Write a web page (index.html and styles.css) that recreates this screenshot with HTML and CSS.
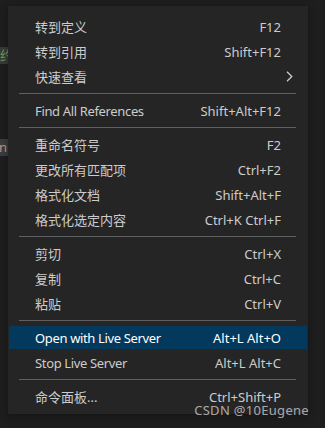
FILE: index.html
```html
<!DOCTYPE html>
<html lang="zh-CN">
<head>
    <meta charset="UTF-8">
    <title>Context Menu</title>
    <link rel="stylesheet" href="styles.css">
</head>
<body>

<div class="screen">
    <!-- editor text clipped behind the menu -->
    <div class="gutter">
        <div class="frag frag-comment">约</div>
        <div class="frag frag-string">n</div>
    </div>

    <div class="menu">
        <div class="item"><span class="label">转到定义</span><span class="keys">F12</span></div>
        <div class="item"><span class="label">转到引用</span><span class="keys">Shift+F12</span></div>
        <div class="item">
            <span class="label">快速查看</span>
            <svg class="chevron" width="7" height="11" viewBox="0 0 7 11">
                <path d="M1 0.8 L5.8 5.5 L1 10.2" fill="none" stroke="#cccccc" stroke-width="1.3"/>
            </svg>
        </div>
        <div class="sep"></div>
        <div class="item"><span class="label en">Find All References</span><span class="keys">Shift+Alt+F12</span></div>
        <div class="sep"></div>
        <div class="item"><span class="label">重命名符号</span><span class="keys">F2</span></div>
        <div class="item"><span class="label">更改所有匹配项</span><span class="keys">Ctrl+F2</span></div>
        <div class="item"><span class="label">格式化文档</span><span class="keys">Shift+Alt+F</span></div>
        <div class="item"><span class="label">格式化选定内容</span><span class="keys">Ctrl+K Ctrl+F</span></div>
        <div class="sep"></div>
        <div class="item"><span class="label">剪切</span><span class="keys">Ctrl+X</span></div>
        <div class="item"><span class="label">复制</span><span class="keys">Ctrl+C</span></div>
        <div class="item"><span class="label">粘贴</span><span class="keys">Ctrl+V</span></div>
        <div class="sep"></div>
        <div class="item active"><span class="label en">Open with Live Server</span><span class="keys">Alt+L Alt+O</span></div>
        <div class="item"><span class="label en">Stop Live Server</span><span class="keys">Alt+L Alt+C</span></div>
        <div class="sep"></div>
        <div class="item"><span class="label">命令面板...</span><span class="keys">Ctrl+Shift+P</span></div>
    </div>

    <div class="watermark">CSDN @10Eugene</div>
</div>

</body>
</html>
```

FILE: styles.css
```css
body {
    margin: 0;
    background-color: #1e1e1e;
    font-family: "Noto Sans", "Noto Sans CJK SC", sans-serif;
    font-size: 13px;
    color: #cccccc;
}

.screen {
    position: relative;
    display: flex;
    width: 325px;
    height: 428px;
    overflow: hidden;
}

.gutter {
    width: 8px;
    overflow: hidden;
    flex-shrink: 0;
}

.frag {
    height: 17px;
    line-height: 17px;
    font-size: 13px;
    white-space: nowrap;
}

.frag-comment {
    margin-top: 47px;
    background-color: #373b38;
    color: #6a9955;
}

.frag-string {
    margin-top: 75px;
    background-color: #3a3d41;
    color: #ce9178;
    text-indent: -1px;
}

.menu {
    width: 300px;
    margin-top: 6px;
    padding: 8px 0 5px;
    align-self: flex-start;
    background-color: #252526;
    box-shadow: 0 2px 8px rgba(0, 0, 0, 0.36);
}

.item {
    display: flex;
    align-items: center;
    height: 23px;
    padding: 0 26px;
    border: 1px solid transparent;
    white-space: nowrap;
}

.item.active {
    background-color: #04395e;
    background-clip: padding-box;
    color: #ffffff;
}

.en {
    letter-spacing: -0.35px;
}

.keys {
    margin-left: auto;
}

.chevron {
    margin-left: auto;
    margin-right: -12px;
}

.sep {
    margin: 0 12px 0 11px;
    padding-top: 4px;
    border-bottom: 1px solid #606060;
    margin-bottom: 4px;
}

.watermark {
    position: absolute;
    right: 16px;
    top: 401px;
    font-size: 13px;
    color: rgba(255, 255, 255, 0.62);
    letter-spacing: 0.3px;
}
```
